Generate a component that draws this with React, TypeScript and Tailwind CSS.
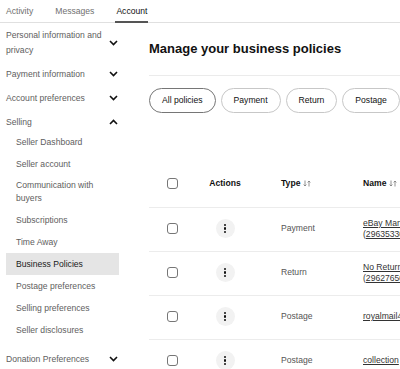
import React from "react";

const Chevron = ({ up = false }: { up?: boolean }) => (
  <svg width="9" height="6" viewBox="0 0 9 6" className="shrink-0">
    {up ? (
      <path d="M1 5 L4.5 1.5 L8 5" fill="none" stroke="#111" strokeWidth="1.6" />
    ) : (
      <path d="M1 1 L4.5 4.5 L8 1" fill="none" stroke="#111" strokeWidth="1.6" />
    )}
  </svg>
);

const SortIcon = () => (
  <svg width="8" height="7" viewBox="0 0 8 7" className="ml-[3px] inline-block">
    <path d="M2 0.5 V6 M0.6 4.6 L2 6 L3.4 4.6" fill="none" stroke="#777" strokeWidth="0.8" />
    <path d="M6 6.5 V1 M4.6 2.4 L6 1 L7.4 2.4" fill="none" stroke="#777" strokeWidth="0.8" />
  </svg>
);

const Checkbox = () => (
  <div className="w-[11px] h-[11px] rounded-[3px] border border-[#767676] bg-white" />
);

const Kebab = () => (
  <div className="w-[19px] h-[19px] rounded-full bg-[#f2f2f2] flex flex-col items-center justify-center gap-[1.6px]">
    <div className="w-[2.2px] h-[2.2px] rounded-full bg-[#111]" />
    <div className="w-[2.2px] h-[2.2px] rounded-full bg-[#111]" />
    <div className="w-[2.2px] h-[2.2px] rounded-full bg-[#111]" />
  </div>
);

const SubItem = ({ label, active = false, tall = false }: { label: string; active?: boolean; tall?: boolean }) => (
  <div
    className={`pl-[10px] pr-[8px] flex items-center ${tall ? "h-[34px] leading-[13px]" : "h-[22px]"} ${
      active ? "bg-[#e5e5e5] text-[#191919]" : "text-[#5e5e5e]"
    }`}
  >
    <span className={tall ? "w-[80px]" : ""}>{label}</span>
  </div>
);

const TopItem = ({ label, up = false, tall = false }: { label: string; up?: boolean; tall?: boolean }) => (
  <div className={`flex items-center justify-between pr-[1px] text-[#5e5e5e] ${tall ? "h-[38px] leading-[15px]" : "h-[24px]"}`}>
    <span className={tall ? "w-[100px]" : ""}>{label}</span>
    <Chevron up={up} />
  </div>
);

const rows = [
  { type: "Payment", name: ["eBay Managed Payments", "(296353300000)"] },
  { type: "Return", name: ["No Returns Accepted", "(296276500000)"] },
  { type: "Postage", name: ["royalmail48"] },
  { type: "Postage", name: ["collection"] },
];

export default function App() {
  return (
    <div
      className="w-[400px] h-[369px] overflow-hidden bg-white text-[8.6px]"
      style={{ fontFamily: '"Liberation Sans", Arial, sans-serif' }}
    >
      {/* Tabs */}
      <div className="h-[23px] border-b border-[#e0e0e0] flex items-stretch pl-[6px]">
        <div className="flex items-center text-[#707070] mr-[22px]">Activity</div>
        <div className="flex items-center text-[#707070] mr-[22px]">Messages</div>
        <div className="relative flex items-center text-[#111]">
          Account
          <div className="absolute left-[-1px] right-[-1px] bottom-[-1px] h-[2px] bg-[#555]" />
        </div>
      </div>

      <div className="flex">
        {/* Sidebar */}
        <div className="w-[113px] ml-[6px] pt-[1px] shrink-0">
          <TopItem label="Personal information and privacy" tall />
          <TopItem label="Payment information" />
          <TopItem label="Account preferences" />
          <TopItem label="Selling" up />
          <div className="mt-[-3px]">
            <SubItem label="Seller Dashboard" />
            <SubItem label="Seller account" />
            <SubItem label="Communication with buyers" tall />
            <SubItem label="Subscriptions" />
            <SubItem label="Time Away" />
            <SubItem label="Business Policies" active />
            <SubItem label="Postage preferences" />
            <SubItem label="Selling preferences" />
            <SubItem label="Seller disclosures" />
          </div>
          <div className="mt-[6px]">
            <TopItem label="Donation Preferences" />
          </div>
        </div>

        {/* Main */}
        <div className="ml-[30px] flex-1 min-w-0">
          <div className="pt-[16px] h-[53px] border-b border-[#ebebeb]">
            <h1 className="text-[13px] leading-[20px] font-bold text-[#111] whitespace-nowrap">
              Manage your business policies
            </h1>
          </div>
          <div className="mt-[12px] flex gap-[5px] whitespace-nowrap">
            <div className="h-[25px] px-[12px] rounded-full border border-[#767676] flex items-center text-[#111]">All policies</div>
            <div className="h-[25px] px-[12px] rounded-full border border-[#c7c7c7] flex items-center text-[#111]">Payment</div>
            <div className="h-[25px] px-[12px] rounded-full border border-[#c7c7c7] flex items-center text-[#111]">Return</div>
            <div className="h-[25px] px-[12px] rounded-full border border-[#c7c7c7] flex items-center text-[#111]">Postage</div>
          </div>

          {/* Table */}
          <div className="mt-[47px] whitespace-nowrap">
            <div className="grid grid-cols-[46px_60px_107px_1fr] h-[48px] items-center border-b border-[#ececec]">
              <div className="flex justify-center pl-[1px]"><Checkbox /></div>
              <div className="text-center font-bold text-[#111]">Actions</div>
              <div className="pl-[26px] font-bold text-[#111] flex items-center">Type<SortIcon /></div>
              <div className="pl-[1px] font-bold text-[#111] flex items-center">Name<SortIcon /></div>
            </div>
            {rows.map((r, i) => (
              <div
                key={i}
                className="grid grid-cols-[46px_60px_107px_1fr] h-[44px] items-center border-b border-[#ececec] pb-[2px]"
              >
                <div className="flex justify-center pl-[1px]"><Checkbox /></div>
                <div className="flex justify-center"><Kebab /></div>
                <div className="pl-[26px] text-[#555]">{r.type}</div>
                <div className="pl-[1px] text-[#333] leading-[11px] underline">
                  {r.name.map((n, j) => (
                    <div key={j}>{n}</div>
                  ))}
                </div>
              </div>
            ))}
          </div>
        </div>
      </div>
    </div>
  );
}
